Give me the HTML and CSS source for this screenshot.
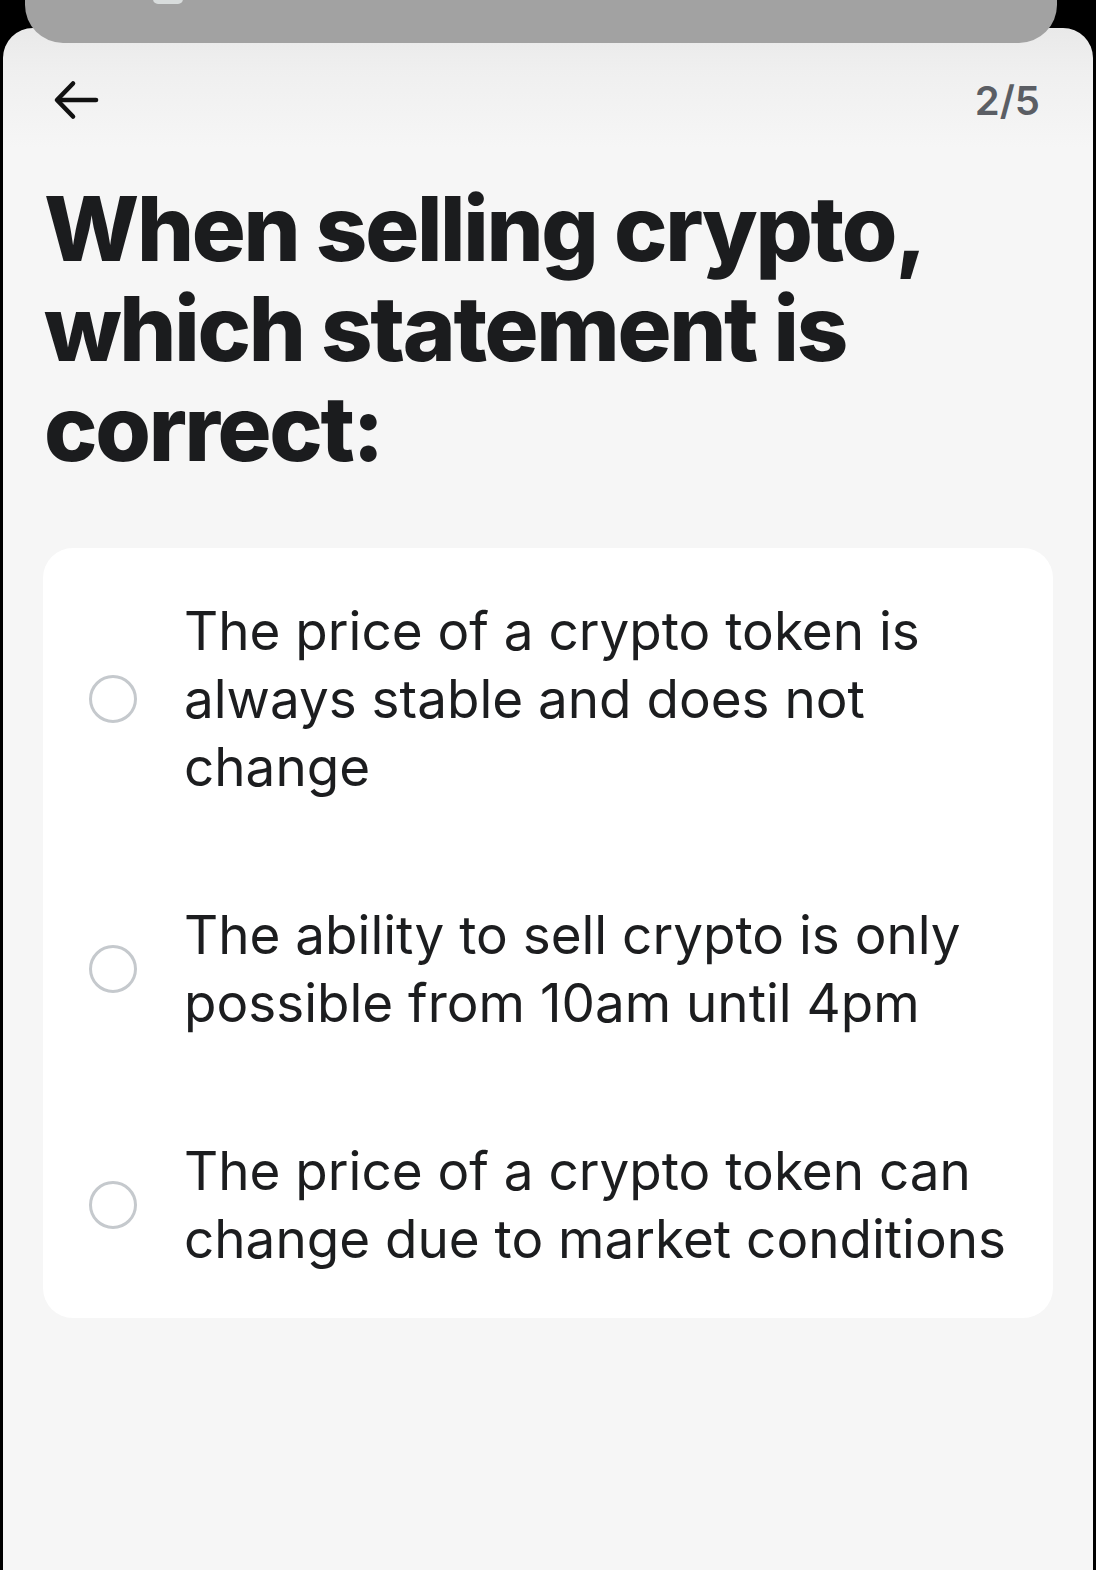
FILE: index.html
```html
<!DOCTYPE html>
<html>
<head>
    <meta charset="utf-8">
    <meta name="viewport" content="width=device-width, initial-scale=1.0">
    <title>Quiz</title>
    <link rel="stylesheet" href="styles.css">
</head>
<body>
    <div class="backdrop"><span class="handle"></span></div>
    <div class="sheet">
        <div class="topbar">
            <button class="back" aria-label="Back">
                <svg width="48" height="40" viewBox="0 0 48 40" fill="none" stroke="#111" stroke-width="4.6" stroke-linecap="round" stroke-linejoin="round">
                    <path d="M43 20H6"/>
                    <path d="M20 3.5L4 20l16 16.5"/>
                </svg>
            </button>
            <div class="progress">2/5</div>
        </div>

        <h1 class="question">When selling crypto, which statement is correct:</h1>

        <div class="answers">
            <label class="answer">
                <span class="radio"></span>
                <span class="answer-text">The price of a crypto token is always stable and does not change</span>
            </label>
            <label class="answer">
                <span class="radio"></span>
                <span class="answer-text">The ability to sell crypto is only possible from 10am until 4pm</span>
            </label>
            <label class="answer">
                <span class="radio"></span>
                <span class="answer-text">The price of a crypto token can change due to market conditions</span>
            </label>
        </div>
    </div>
</body>
</html>
```

FILE: styles.css
```css
* {
    box-sizing: border-box;
    margin: 0;
    padding: 0;
}
html, body {
    height: 100%;
}
body {
    font-family: Inter, "Noto Sans", sans-serif;
    background: #000;
    color: #1b1c1e;
    position: relative;
    overflow: hidden;
}
.backdrop {
    position: absolute;
    top: 0;
    left: 25px;
    width: 1032px;
    height: 43px;
    background: #a2a2a2;
    border-radius: 0 0 38px 38px;
    z-index: 2;
}
.handle {
    position: absolute;
    top: -6px;
    left: 128px;
    width: 30px;
    height: 10px;
    border-radius: 5px;
    background: #d8dcdc;
}
.sheet {
    margin: 28px 3px 0 3px;
    min-height: 1542px;
    padding: 42px 40px 0;
    background: linear-gradient(#e9e9e9 0, #efefef 40px, #f6f6f6 120px);
    border-radius: 30px 30px 0 0;
}
.topbar {
    display: flex;
    justify-content: space-between;
    align-items: center;
    height: 60px;
    padding: 0 13px 0 10px;
}
.back {
    border: none;
    background: none;
    display: flex;
    cursor: pointer;
}
.progress {
    font-size: 40px;
    font-weight: 600;
    color: #5b5e64;
}
.question {
    margin-top: 49px;
    font-size: 90px;
    line-height: 100px;
    font-weight: 800;
    letter-spacing: -2.3px;
    color: #1b1c1e;
    padding-left: 1px;
}
.answers {
    margin-top: 69px;
    background: #fff;
    border-radius: 30px;
    padding: 49px 36px 45px 46px;
    display: flex;
    flex-direction: column;
    gap: 100px;
}
.answer {
    display: flex;
    align-items: center;
    gap: 47px;
    cursor: pointer;
}
.radio {
    flex: none;
    width: 48px;
    height: 48px;
    border: 3px solid #c5c9cd;
    border-radius: 50%;
}
.answer-text {
    font-size: 53px;
    line-height: 68px;
    color: #1c1d1f;
}
```
